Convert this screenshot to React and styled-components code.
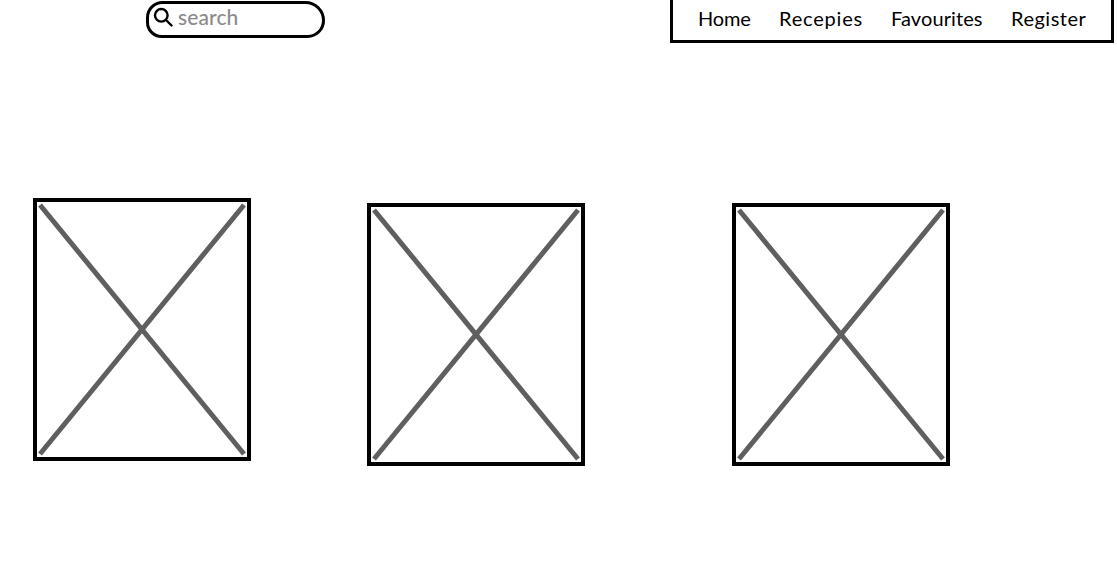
import React from "react";
import styled, { createGlobalStyle } from "styled-components";

const Global = createGlobalStyle`
  html, body { margin: 0; padding: 0; background: #fff; }
  body { font-family: "Lato", "Open Sans", sans-serif; color: #000; }
`;

const Page = styled.div`
  width: 1117px;
  height: 573px;
  overflow: hidden;
`;

const Header = styled.header`
  display: flex;
  align-items: flex-start;
  justify-content: space-between;
  height: 43px;
  padding: 0 3px 0 146px;
`;

const SearchBox = styled.label`
  box-sizing: border-box;
  display: flex;
  align-items: center;
  gap: 5px;
  width: 179px;
  height: 37px;
  margin-top: 1px;
  padding: 0 0 6px 4px;
  border: 3px solid #000;
  border-radius: 17px 20px 18px 16px;
`;

const SearchText = styled.span`
  font-size: 21px;
  line-height: 24px;
  color: #8b8b8b;
  font-weight: 500;
  letter-spacing: 0.1px;
`;

const Nav = styled.nav`
  box-sizing: border-box;
  display: flex;
  align-items: center;
  width: 444px;
  height: 43px;
  padding: 0 0 5px 25px;
  border: 3px solid #000;
  border-top: none;
`;

const NavLink = styled.a`
  font-size: 20px;
  line-height: 24px;
  color: #000;
  width: ${(p) => p.$w}px;
  letter-spacing: ${(p) => p.$track}px;
`;

const Gallery = styled.main`
  display: flex;
  align-items: flex-start;
  padding: 155px 0 0 33px;
`;

const Placeholder = styled.div`
  box-sizing: border-box;
  flex: none;
  width: ${(p) => p.$w}px;
  height: 263px;
  margin-top: ${(p) => (p.$drop ? 5 : 0)}px;
  margin-left: ${(p) => p.$left}px;
  border: 4px solid #000;
`;

const Cross = styled.svg`
  display: block;
  width: 100%;
  height: 100%;
`;

const SearchIcon = () => (
  <svg width="20" height="20" viewBox="0 0 20 20" fill="none" stroke="#000" strokeWidth="2.4" strokeLinecap="round">
    <circle cx="8.3" cy="8.3" r="6.3" />
    <path d="M13 13 L18.5 18.5" />
  </svg>
);

const PlaceholderCross = () => (
  <Cross viewBox="0 0 210 255" preserveAspectRatio="none" fill="none" stroke="#5f5f5f" strokeWidth="5">
    <path d="M3 3 L207 252" />
    <path d="M207 3 L3 252" />
  </Cross>
);

export default function App() {
  return (
    <Page>
      <Global />
      <Header>
        <SearchBox>
          <SearchIcon />
          <SearchText>search</SearchText>
        </SearchBox>
        <Nav>
          <NavLink $w={81} $track={-0.2}>Home</NavLink>
          <NavLink $w={112} $track={0.8}>Recepies</NavLink>
          <NavLink $w={120} $track={0.1}>Favourites</NavLink>
          <NavLink $w={80} $track={0.5}>Register</NavLink>
        </Nav>
      </Header>
      <Gallery>
        <Placeholder $w={218} $left={0}><PlaceholderCross /></Placeholder>
        <Placeholder $w={218} $left={116} $drop><PlaceholderCross /></Placeholder>
        <Placeholder $w={218} $left={147} $drop><PlaceholderCross /></Placeholder>
      </Gallery>
    </Page>
  );
}
